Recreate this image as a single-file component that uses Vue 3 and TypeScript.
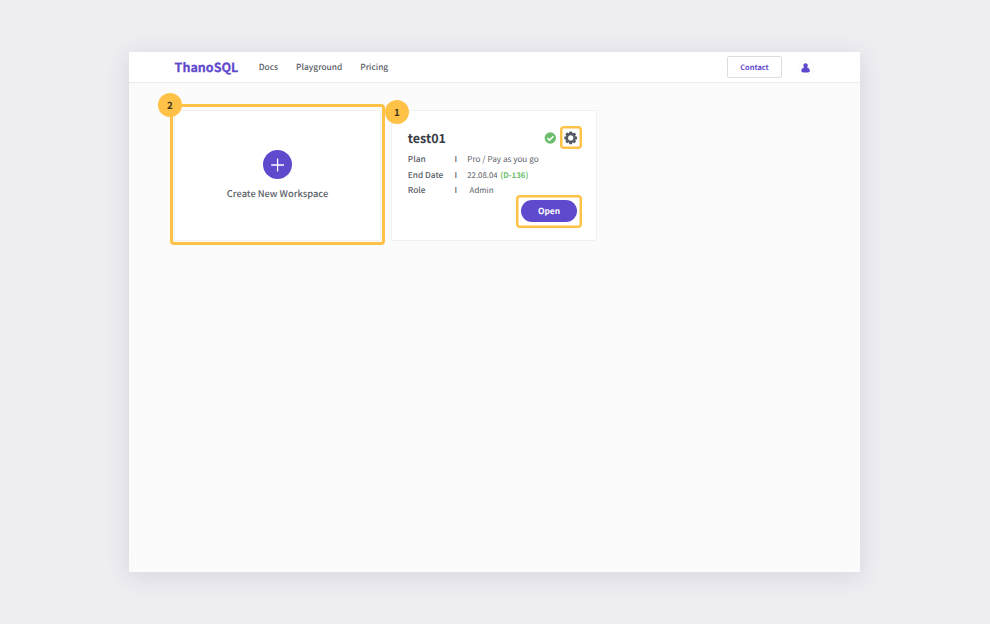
<script setup lang="ts">
interface Detail {
  label: string
  value: string
  remaining?: string
}

const links: string[] = ['Docs', 'Playground', 'Pricing']

const details: Detail[] = [
  { label: 'Plan', value: 'Pro / Pay as you go' },
  { label: 'End Date', value: '22.08.04', remaining: '(D-136)' },
  { label: 'Role', value: 'Admin' },
]
</script>

<template>
  <div class="stage">
    <div class="window">
      <header class="bar">
        <span class="logo">ThanoSQL</span>
        <nav class="nav">
          <a v-for="link in links" :key="link" class="link">{{ link }}</a>
        </nav>
        <button class="contact" type="button">Contact</button>
        <span class="avatar">
          <svg viewBox="0 0 10 10" width="10" height="10">
            <path d="M4.6 0.3C6.1 0.3 7 1.3 6.8 2.6C6.7 3.5 6.2 4 6.2 4.6C7.9 4.9 8.9 6.2 8.9 8Q8.9 9.6 4.6 9.6Q0.3 9.6 0.3 8C0.3 6.2 1.3 4.9 3 4.6C3 4 2.5 3.5 2.4 2.6C2.2 1.3 3.1 0.3 4.6 0.3Z" fill="#5f49cc" />
          </svg>
        </span>
      </header>

      <main class="cards">
        <section class="card create">
          <span class="plus">
            <svg viewBox="0 0 29 29" width="29" height="29">
              <path d="M14.6 8.6V21.4M8.2 15H21" fill="none" stroke="#fff" stroke-width="1.3" />
            </svg>
          </span>
          <span class="create-label">Create New Workspace</span>
          <span class="frame"></span>
          <span class="badge two">2</span>
        </section>

        <section class="card workspace">
          <div class="title-row">
            <h2 class="title">test01</h2>
            <svg class="check" viewBox="0 0 12 12" width="12" height="12">
              <circle cx="6.3" cy="6" r="5.7" fill="#6cbd6d" />
              <path d="M3.4 6.1L5.6 8.1L9.4 4.3" fill="none" stroke="#fff" stroke-width="1.5" />
            </svg>
            <span class="gear">
              <svg viewBox="-7 -7 14 14" width="14" height="14">
                <g transform="translate(-0.3 -0.1)">
                  <g fill="#555b66">
                    <rect v-for="n in 4" :key="n" x="-1.5" y="-6.4" width="3" height="12.8" rx="0.6" :transform="`rotate(${n * 45})`" />
                    <circle r="5.1" />
                  </g>
                  <circle r="2.6" fill="#fff" />
                </g>
              </svg>
            </span>
          </div>
          <dl class="details">
            <div v-for="item in details" :key="item.label" :class="['detail', item.label.slice(0, 3).toLowerCase()]">
              <dt>{{ item.label }}</dt>
              <dd class="divider">I</dd>
              <dd class="value">{{ item.value }}</dd>
              <dd v-if="item.remaining" class="remaining">{{ item.remaining }}</dd>
            </div>
          </dl>
          <div class="open-frame"><button class="open" type="button">Open</button></div>
          <span class="badge one">1</span>
        </section>
      </main>
    </div>
  </div>
</template>

<style>
body {
  margin: 0;
  background: #fff;
}
</style>

<style scoped>
* {
  box-sizing: border-box;
}
.stage {
  width: 990px;
  height: 624px;
  padding: 52px 130px 52px 129px;
  background: #eeedf2;
  font-family: "Noto Sans CJK KR", "Noto Sans", sans-serif;
  color: #5a5e67;
  text-rendering: geometricPrecision;
}
.window {
  width: 731px;
  height: 520px;
  background: #fbfbfb;
  box-shadow: 0 4px 22px rgba(60, 55, 80, 0.13);
}
.bar {
  height: 31px;
  display: flex;
  align-items: center;
  padding: 0 47px 0 45.6px;
  background: #fff;
  border-bottom: 1px solid #ebebed;
}
.logo {
  width: 84.2px;
  padding-bottom: 1px;
  font-size: 12.5px;
  line-height: 20px;
  font-weight: 700;
  color: #5f49cc;
  -webkit-text-stroke: 0.25px #5f49cc;
}
.nav {
  display: flex;
  gap: 18px;
  flex: 1;
  padding-bottom: 1px;
}
.link {
  font-size: 8.35px;
  line-height: 14px;
  font-weight: 500;
  white-space: nowrap;
}
.contact {
  width: 55px;
  height: 22px;
  padding: 1px 0 0;
  border: 1px solid #dddde1;
  border-radius: 2px;
  background: #fff;
  font: 700 7.4px/20px "Noto Sans CJK KR", sans-serif;
  color: #5f49cc;
  text-rendering: geometricPrecision;
}
.avatar {
  width: 14px;
  height: 14px;
  margin: 2px 0 0 17px;
  display: flex;
  align-items: center;
  justify-content: center;
  border-radius: 50%;
  box-shadow: 0 0 3px rgba(0, 0, 0, 0.07);
}
.cards {
  display: grid;
  grid-template-columns: 207px 206px;
  gap: 10px;
  padding: 27px 0 0 45px;
}
.card {
  position: relative;
  height: 131px;
  background: #fff;
  border: 1px solid #f0f0f1;
  border-radius: 2px;
}
.create {
  display: flex;
  flex-direction: column;
  align-items: center;
  padding-top: 39px;
}
.plus {
  width: 29px;
  height: 29px;
  border-radius: 50%;
  background: #5f49cc;
}
.plus svg {
  display: block;
}
.create-label {
  margin-top: 6px;
  font-size: 9.3px;
  line-height: 16px;
  font-weight: 500;
}
.frame {
  position: absolute;
  inset: -7px -5px -5px;
  border: 3px solid #ffc247;
  border-radius: 4px;
}
.badge {
  position: absolute;
  width: 24px;
  height: 24px;
  border-radius: 50%;
  background: #ffc247;
  color: #40351f;
  font-size: 9.8px;
  line-height: 24px;
  font-weight: 700;
  text-align: center;
}
.two {
  left: -17px;
  top: -18px;
}
.one {
  left: -7px;
  top: -11px;
}
.workspace {
  padding: 15px 14px 0 15.8px;
}
.title-row {
  height: 23px;
  display: flex;
  align-items: center;
}
.title {
  flex: 1;
  margin: 0;
  padding-top: 1px;
  font-size: 12.5px;
  line-height: 20px;
  font-weight: 700;
  color: #383d47;
}
.gear {
  width: 22px;
  height: 23px;
  margin-left: 4px;
  display: flex;
  align-items: center;
  justify-content: center;
  border: 2px solid #ffc247;
  border-radius: 4px;
  box-shadow: inset 0 0 0 0.5px #ffc247;
}
.details {
  margin: 3px 0 0;
}
.detail {
  height: 15.5px;
  display: flex;
  align-items: center;
  font-size: 8.3px;
  line-height: 15px;
  white-space: nowrap;
}
dt {
  width: 46.8px;
  font-weight: 500;
}
dd {
  margin: 0;
}
.divider {
  width: 3px;
  font-weight: 500;
}
.value {
  margin-left: 9.7px;
  font-size: 8.2px;
}
.end .value {
  font-size: 7.8px;
}
.rol .value {
  margin-left: 12px;
  font-size: 7.9px;
}
.remaining {
  margin-left: 2.6px;
  font-size: 7.8px;
  font-weight: 600;
  color: #6cbd6d;
}
.open-frame {
  width: 66px;
  height: 33px;
  margin: -4px 0 0 auto;
  padding: 3px 2px 3px 3px;
  border: 2px solid #ffc247;
  border-radius: 4px;
  box-shadow: inset 0 0 0 0.5px #ffc247;
}
.open {
  display: block;
  width: 56px;
  height: 22.5px;
  padding: 0.5px 0 0;
  border: 0;
  border-radius: 11.5px;
  background: #5f49cc;
  color: #fff;
  font: 700 8.4px/22px "Noto Sans CJK KR", sans-serif;
  text-rendering: geometricPrecision;
}
</style>
